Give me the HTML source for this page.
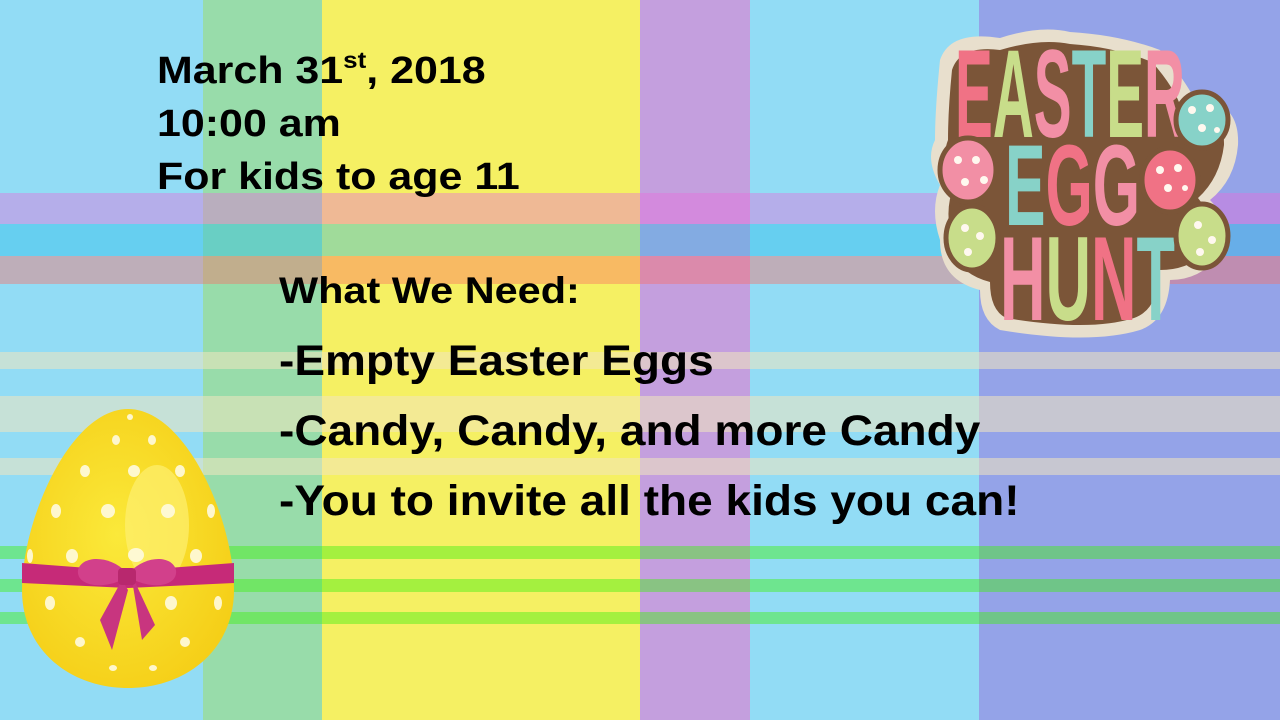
<!DOCTYPE html>
<html><head><meta charset="utf-8"><style>
*{margin:0;padding:0}
body{width:1280px;height:720px;position:relative;overflow:hidden;background:#92dcf5;font-family:"Liberation Sans",sans-serif}
.c,.s{position:absolute}
.t{position:absolute;font-weight:bold;color:#000;white-space:nowrap;transform-origin:0 0}
</style></head><body>
<div class="c" style="left:0;top:0;width:203px;height:720px;background:#92dcf5"></div>
<div class="c" style="left:203px;top:0;width:119px;height:720px;background:#98dcaa"></div>
<div class="c" style="left:322px;top:0;width:318px;height:720px;background:#f5f063"></div>
<div class="c" style="left:640px;top:0;width:110px;height:720px;background:#c49fde"></div>
<div class="c" style="left:750px;top:0;width:229px;height:720px;background:#92dcf5"></div>
<div class="c" style="left:979px;top:0;width:301px;height:720px;background:#94a3e8"></div>

<div class="s" style="left:0;top:193px;width:1280px;height:31px;background:rgba(230,110,220,0.42)"></div>
<div class="s" style="left:0;top:224px;width:1280px;height:32px;background:rgba(40,190,232,0.41)"></div>
<div class="s" style="left:0;top:256px;width:1280px;height:28px;background:rgba(253,110,100,0.41)"></div>
<div class="s" style="left:0;top:352px;width:1280px;height:17px;background:rgba(240,230,190,0.55)"></div>
<div class="s" style="left:0;top:396px;width:1280px;height:36px;background:rgba(240,230,190,0.55)"></div>
<div class="s" style="left:0;top:458px;width:1280px;height:17px;background:rgba(240,230,190,0.55)"></div>
<div class="s" style="left:0;top:546px;width:1280px;height:13px;background:rgba(67,240,20,0.45)"></div>
<div class="s" style="left:0;top:579px;width:1280px;height:13px;background:rgba(67,240,20,0.45)"></div>
<div class="s" style="left:0;top:612px;width:1280px;height:12px;background:rgba(67,240,20,0.45)"></div>

<div class="t" style="left:157px;top:45px;font-size:38px;line-height:53px;transform:scaleX(1.13)">March 31<sup style="font-size:23px;vertical-align:15px;line-height:0">st</sup>, 2018<br>10:00 am<br>For kids to age 11</div>

<div class="t" style="left:279px;top:270px;font-size:37px;transform:scaleX(1.12)">What We Need:</div>
<div class="t" style="left:279px;top:337px;font-size:43px;transform:scaleX(1.07)">-Empty Easter Eggs</div>
<div class="t" style="left:279px;top:407px;font-size:43px;transform:scaleX(1.07)">-Candy, Candy, and more Candy</div>
<div class="t" style="left:279px;top:477px;font-size:43px;transform:scaleX(1.07)">-You to invite all the kids you can!</div>

<!-- egg -->
<svg class="c" style="left:0;top:400px" width="260" height="300" viewBox="0 400 260 300">
<defs><radialGradient id="eg" cx="0.45" cy="0.45" r="0.6"><stop offset="0" stop-color="#fbe93a"/><stop offset="1" stop-color="#f5cf18"/></radialGradient></defs>
<path d="M128 409 C70 409 22 520 22 590 C22 650 70 688 128 688 C186 688 234 650 234 590 C234 520 186 409 128 409Z" fill="url(#eg)"/>
<ellipse cx="157" cy="525" rx="32" ry="60" fill="#fdf070" opacity="0.7"/>
<g fill="#fffbe0" opacity="0.9">
<ellipse cx="130" cy="417" rx="3" ry="3"/><ellipse cx="116" cy="440" rx="4" ry="5"/><ellipse cx="152" cy="440" rx="4" ry="5"/>
<ellipse cx="85" cy="471" rx="5" ry="6"/><ellipse cx="134" cy="471" rx="6" ry="6"/><ellipse cx="180" cy="471" rx="5" ry="6"/>
<ellipse cx="56" cy="511" rx="5" ry="7"/><ellipse cx="108" cy="511" rx="7" ry="7"/><ellipse cx="168" cy="511" rx="7" ry="7"/><ellipse cx="211" cy="511" rx="4" ry="7"/>
<ellipse cx="30" cy="556" rx="3" ry="7"/><ellipse cx="72" cy="556" rx="6" ry="7"/><ellipse cx="136" cy="555" rx="8" ry="7"/><ellipse cx="196" cy="556" rx="6" ry="7"/>
<ellipse cx="50" cy="603" rx="5" ry="7"/><ellipse cx="171" cy="603" rx="6" ry="7"/><ellipse cx="218" cy="603" rx="4" ry="7"/>
<ellipse cx="80" cy="642" rx="5" ry="5"/><ellipse cx="185" cy="642" rx="5" ry="5"/><ellipse cx="113" cy="668" rx="4" ry="3"/><ellipse cx="153" cy="668" rx="4" ry="3"/>
</g>
<path d="M22 563 L128 571 L234 563 L234 583 L128 588 L22 583Z" fill="#c62a78"/>
<path d="M126 572 C110 555 82 555 78 570 C76 585 100 590 122 580Z" fill="#d2408b"/>
<path d="M130 572 C146 555 172 555 176 570 C178 585 156 590 134 580Z" fill="#d2408b"/>
<path d="M122 580 L100 620 L112 650 L128 590Z" fill="#c8357f"/>
<path d="M132 580 L142 640 L155 625 L135 582Z" fill="#c8357f"/>
<rect x="118" y="568" width="18" height="17" rx="4" fill="#b8286e"/>
</svg>

<!-- logo -->
<svg class="c" style="left:920px;top:20px" width="340" height="330" viewBox="0 0 340 330">
<path d="M20 40 Q30 10 80 18 Q120 5 150 12 Q200 15 240 30 Q265 60 275 80 Q320 80 318 125 Q315 160 290 180 Q310 200 300 235 Q280 260 250 260 Q248 300 220 310 Q170 325 80 310 Q60 300 60 270 Q20 260 20 220 Q10 190 20 165 Q5 140 15 120 Q15 90 20 40Z" fill="#e8dfcd"/>
<path d="M32 50 Q40 25 80 30 Q120 18 150 24 Q195 27 232 42 Q255 68 262 90 Q305 88 304 125 Q300 158 278 178 Q296 200 288 230 Q270 250 240 250 Q238 290 214 298 Q170 312 86 298 Q70 290 70 262 Q32 252 32 218 Q24 190 34 166 Q20 140 28 120 Q28 90 32 50Z" fill="#7b5538"/>
<g font-family="'Liberation Sans',sans-serif" font-weight="bold">
<text x="35" y="117" font-size="125" textLength="230" lengthAdjust="spacingAndGlyphs"><tspan fill="#f07285">E</tspan><tspan fill="#c8dd8a">A</tspan><tspan fill="#f28fa5">S</tspan><tspan fill="#87d2c8">T</tspan><tspan fill="#c8dd8a">E</tspan><tspan fill="#f28fa5">R</tspan></text>
<text x="85" y="205" font-size="115" textLength="135" lengthAdjust="spacingAndGlyphs"><tspan fill="#87d2c8">E</tspan><tspan fill="#f07285">G</tspan><tspan fill="#f28fa5">G</tspan></text>
<text x="80" y="300" font-size="120" textLength="175" lengthAdjust="spacingAndGlyphs"><tspan fill="#f28fa5">H</tspan><tspan fill="#c8dd8a">U</tspan><tspan fill="#f07285">N</tspan><tspan fill="#87d2c8">T</tspan></text>
</g>
<g stroke="#7b5538" stroke-width="5">
<ellipse cx="282" cy="100" rx="26" ry="28" fill="#87d2c8"/>
<ellipse cx="48" cy="150" rx="28" ry="32" fill="#f28fa5"/>
<ellipse cx="250" cy="160" rx="28" ry="32" fill="#f07285"/>
<ellipse cx="52" cy="218" rx="26" ry="32" fill="#c8dd8a"/>
<ellipse cx="282" cy="216" rx="26" ry="32" fill="#c8dd8a"/>
</g>
<g fill="#fff8ef">
<circle cx="272" cy="90" r="4"/><circle cx="290" cy="88" r="4"/><circle cx="282" cy="108" r="4"/><circle cx="297" cy="110" r="3"/>
<circle cx="38" cy="140" r="4"/><circle cx="56" cy="140" r="4"/><circle cx="45" cy="162" r="4"/><circle cx="64" cy="160" r="4"/>
<circle cx="240" cy="150" r="4"/><circle cx="258" cy="148" r="4"/><circle cx="248" cy="168" r="4"/><circle cx="265" cy="168" r="3"/>
<circle cx="45" cy="208" r="4"/><circle cx="60" cy="216" r="4"/><circle cx="48" cy="232" r="4"/>
<circle cx="278" cy="205" r="4"/><circle cx="292" cy="220" r="4"/><circle cx="280" cy="232" r="4"/>
</g>
</svg>
</body></html>
